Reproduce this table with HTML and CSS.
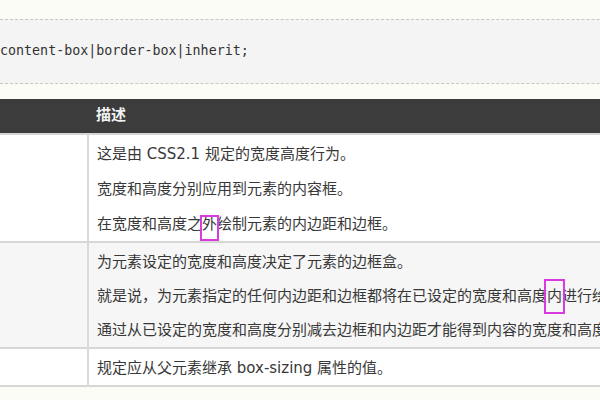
FILE: index.html
```html
<!DOCTYPE html>
<html lang="zh-CN">
  <head>
    <meta charset="utf-8" />
    <meta name="viewport" content="width=device-width, initial-scale=1" />
    <title>box-sizing</title>
    <link rel="stylesheet" href="styles.css">
  </head>
  <body>
    <div class="page">
      <pre class="code">content-box|border-box|inherit;</pre>

      <table class="ref">
        <tr>
          <th class="col-value"></th>
          <th>描述</th>
        </tr>
        <tr>
          <td></td>
          <td>
            <p>这是由 CSS2.1 规定的宽度高度行为。</p>
            <p>宽度和高度分别应用到元素的内容框。</p>
            <p>在宽度和高度之<span class="mark mark-out">外</span>绘制元素的内边距和边框。</p>
          </td>
        </tr>
        <tr class="alt">
          <td></td>
          <td>
            <p>为元素设定的宽度和高度决定了元素的边框盒。</p>
            <p>就是说，为元素指定的任何内边距和边框都将在已设定的宽度和高度<span class="mark mark-in">内</span>进行绘制。</p>
            <p>通过从已设定的宽度和高度分别减去边框和内边距才能得到内容的宽度和高度。</p>
          </td>
        </tr>
        <tr>
          <td></td>
          <td>
            <p>规定应从父元素继承 box-sizing 属性的值。</p>
          </td>
        </tr>
      </table>
    </div>
  </body>
</html>
```

FILE: styles.css
```css
html,
body {
  overflow: hidden;
}

body {
  background: #fcfcf7;
  color: #383838;
  font-family: "DejaVu Sans", "Noto Sans CJK SC", sans-serif;
  font-size: 15px;
  margin: 0;
}

.page {
  padding-top: 19px;
  width: 780px;
}

.code {
  background: #f4f4f4;
  border-bottom: 1px dashed #c8c8c0;
  border-top: 1px dashed #c8c8c0;
  color: #333;
  font-family: "DejaVu Sans Mono", monospace;
  font-size: 13.33px;
  line-height: 21px;
  margin: 0 0 15px;
  padding: 20px 0 22px;
}

.ref {
  border-bottom: 2px solid #d6d6d6;
  border-collapse: collapse;
  width: 100%;
}

.ref th {
  background: #3c3c3c;
  border-bottom: 1px solid #8a8a8a;
  color: #f2f2f2;
  font-weight: bold;
  line-height: 21px;
  padding: 6px 8px 7px;
  text-align: left;
}

.ref .col-value {
  width: 72px;
}

.ref td {
  background: #fff;
  border-top: 2px solid #d6d6d6;
  line-height: 21px;
  padding: 9px 8px 6px;
  vertical-align: top;
  white-space: nowrap;
}

.ref td + td {
  border-left: 2px solid #dadada;
}

.ref .alt td {
  background: #f6f6f6;
}

.ref p {
  margin: 0 0 14px;
}

.ref .alt p {
  margin-bottom: 13px;
}

.ref p:last-child {
  margin-bottom: 0;
}

/* magenta highlight boxes drawn over single characters */
.mark {
  position: relative;
}

.mark::after {
  border: 2px solid #d83ce0;
  content: "";
  position: absolute;
}

.mark-out::after {
  bottom: -8px;
  left: -2px;
  right: -2px;
  top: 0;
}

.mark-in::after {
  bottom: -9px;
  left: -3px;
  right: -3px;
  top: -8px;
}
```
